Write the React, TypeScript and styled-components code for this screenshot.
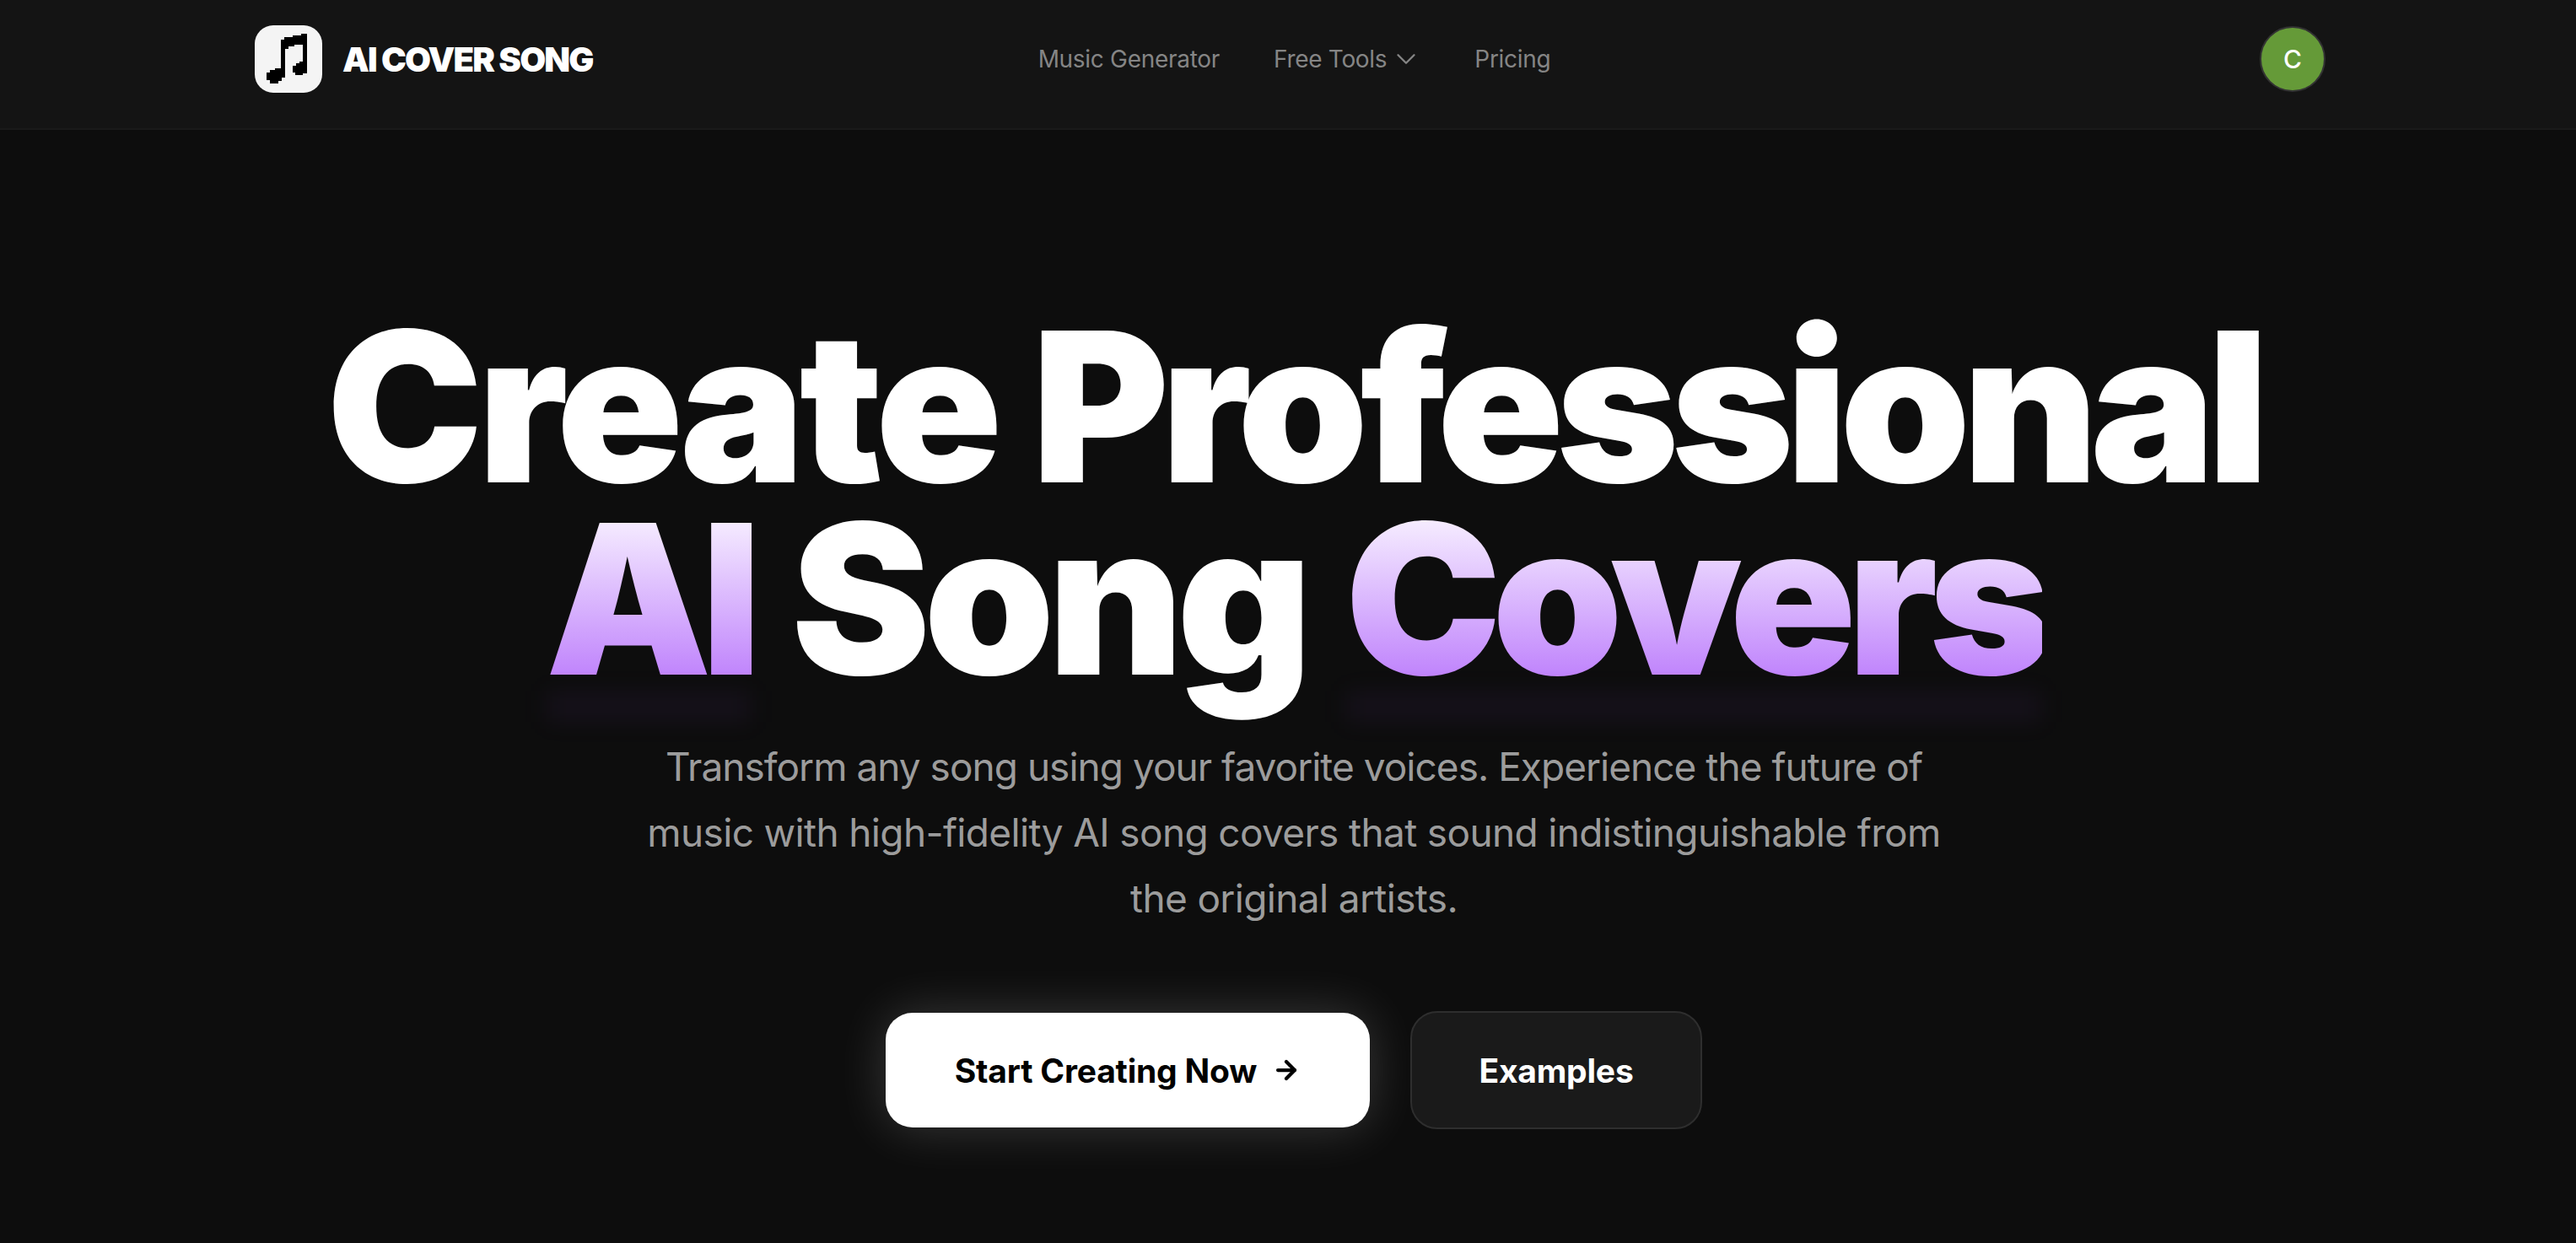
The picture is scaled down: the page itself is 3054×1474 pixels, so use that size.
import React from 'react';
import styled, { createGlobalStyle } from 'styled-components';
import { ArrowRight, ChevronDown } from 'lucide-react';

const GlobalStyle = createGlobalStyle`
  html, body {
    margin: 0;
    padding: 0;
    background: #0d0d0d;
  }
  * {
    box-sizing: border-box;
  }
  body {
    font-family: Inter, "Noto Sans", sans-serif;
    overflow: hidden;
  }
`;

const Page = styled.div`
  width: 3054px;
  height: 1474px;
  background: #0d0d0d;
  overflow: hidden;
`;

const NavBar = styled.header`
  height: 154px;
  background: #141414;
  border-bottom: 2px solid #1a1a1a;
  padding: 0 297px 12px 302px;
  display: grid;
  grid-template-columns: 1fr auto 1fr;
  align-items: center;
`;

const Brand = styled.div`
  display: flex;
  align-items: center;
  gap: 24px;
`;

const LogoBox = styled.div`
  width: 80px;
  height: 80px;
  border-radius: 22px;
  background: #f4f4f4;
  display: flex;
`;

const BrandName = styled.span`
  font-size: 40px;
  font-weight: 900;
  letter-spacing: -1.8px;
  color: #fff;
`;

const NavLinks = styled.nav`
  display: flex;
  align-items: center;
  gap: 64px;
  margin-left: 10px;
`;

const NavLink = styled.a`
  display: flex;
  align-items: center;
  gap: 4px;
  font-size: 28px;
  letter-spacing: -0.3px;
  color: #858585;

  svg {
    margin-right: -2px;
  }
`;

const AvatarSlot = styled.div`
  display: flex;
  justify-content: flex-end;
`;

const Avatar = styled.div`
  width: 78px;
  height: 78px;
  border-radius: 50%;
  background: #659a38;
  border: 2px solid #333;
  color: #fff;
  font-size: 30px;
  font-weight: 500;
  display: flex;
  align-items: center;
  justify-content: center;
`;

const Hero = styled.main`
  display: flex;
  flex-direction: column;
  align-items: center;
  padding: 214px 0 0 14px;
`;

const Title = styled.h1`
  margin: 0;
  font-size: 248px;
  font-weight: 900;
  line-height: 228px;
  text-align: center;
  color: #fff;
`;

const Line = styled.span<{ $space: number }>`
  display: block;
  word-spacing: ${(p) => p.$space}px;
`;

const Word = styled.span<{ $track: number }>`
  letter-spacing: ${(p) => p.$track}px;
`;

const Accent = styled.span<{ $track: number }>`
  position: relative;
  display: inline-block;
  letter-spacing: ${(p) => p.$track}px;
  background: linear-gradient(180deg, #f5ebff 10%, #c084fc 90%);
  -webkit-background-clip: text;
  background-clip: text;
  color: transparent;

  &::after {
    content: '';
    position: absolute;
    left: 0;
    right: 0;
    bottom: -32px;
    height: 36px;
    background: rgba(168, 85, 247, 0.06);
    filter: blur(14px);
  }
`;

const Subtitle = styled.p`
  margin: 46px 0 0;
  width: 1600px;
  font-size: 46px;
  line-height: 78px;
  color: #9c9c9c;
  text-align: center;
`;

const SubLine = styled.span<{ $track: number }>`
  display: block;
  letter-spacing: ${(p) => p.$track}px;
`;

const Actions = styled.div`
  display: flex;
  align-items: center;
  gap: 48px;
  margin-top: 95px;
`;

const PrimaryButton = styled.button`
  width: 574px;
  height: 136px;
  border: none;
  border-radius: 32px;
  background: #fff;
  color: #000;
  font: 700 39px Inter, sans-serif;
  letter-spacing: -0.2px;
  display: flex;
  align-items: center;
  justify-content: center;
  gap: 18px;
  box-shadow: 0 0 60px rgba(255, 255, 255, 0.18);
`;

const SecondaryButton = styled.button`
  width: 346px;
  height: 140px;
  border: 2px solid #2e2e2e;
  border-radius: 32px;
  background: #1a1a1a;
  color: #fff;
  font: 700 39px Inter, sans-serif;
  letter-spacing: -0.2px;
`;

const MusicNote = () => (
  <svg width="80" height="80" viewBox="0 0 80 80" fill="#000">
    <path d="M31 17H35V14H45V12H55V10H62V57H57V59H48V56H45V48H49V45H53V43H57V23H47V25H40V28H36V62H32V66H28V69H18V65H14V56H18V53H24V51H31Z" />
  </svg>
);

export default function App() {
  return (
    <Page>
      <GlobalStyle />
      <NavBar>
        <Brand>
          <LogoBox>
            <MusicNote />
          </LogoBox>
          <BrandName>AI COVER SONG</BrandName>
        </Brand>
        <NavLinks>
          <NavLink>Music Generator</NavLink>
          <NavLink>
            Free Tools
            <ChevronDown size={38} strokeWidth={1.5} />
          </NavLink>
          <NavLink>Pricing</NavLink>
        </NavLinks>
        <AvatarSlot>
          <Avatar>C</Avatar>
        </AvatarSlot>
      </NavBar>
      <Hero>
        <Title>
          <Line $space={-8}>
            <Word $track={-6.4}>Create</Word> <Word $track={-9.5}>Professional</Word>
          </Line>
          <Line $space={-2.5}>
            <Accent $track={-12.5}>AI</Accent> <Word $track={-8}>Song</Word>{' '}
            <Accent $track={-11}>Covers</Accent>
          </Line>
        </Title>
        <Subtitle>
          <SubLine $track={-0.98}>Transform any song using your favorite voices. Experience the future of</SubLine>
          <SubLine $track={-0.65}>music with high-fidelity AI song covers that sound indistinguishable from</SubLine>
          <SubLine $track={-0.65}>the original artists.</SubLine>
        </Subtitle>
        <Actions>
          <PrimaryButton>
            Start Creating Now
            <ArrowRight size={34} strokeWidth={3} />
          </PrimaryButton>
          <SecondaryButton>Examples</SecondaryButton>
        </Actions>
      </Hero>
    </Page>
  );
}
